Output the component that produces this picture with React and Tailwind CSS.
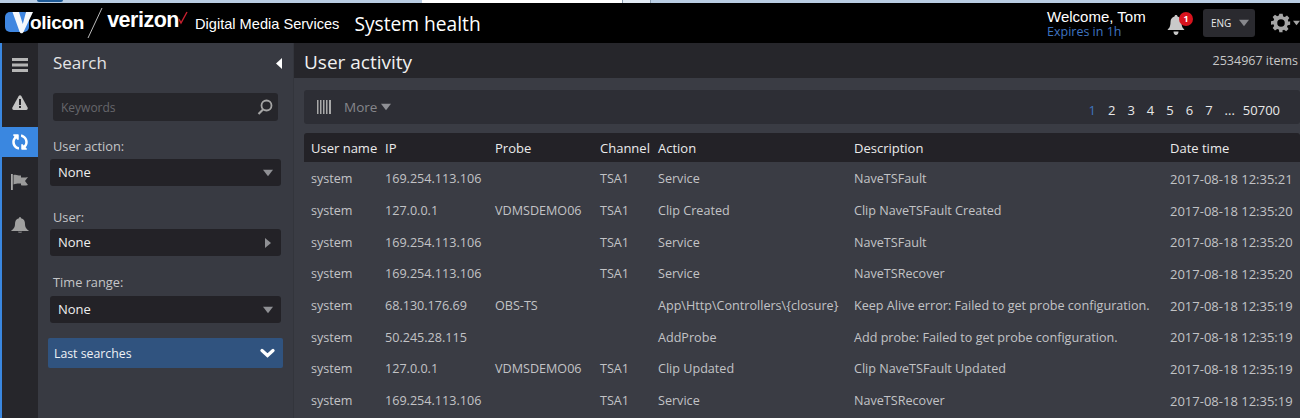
import React from "react";
import { FaSyncAlt } from "react-icons/fa";

const rows = [
  ["system", "169.254.113.106", "", "TSA1", "Service", "NaveTSFault", "2017-08-18 12:35:21"],
  ["system", "127.0.0.1", "VDMSDEMO06", "TSA1", "Clip Created", "Clip NaveTSFault Created", "2017-08-18 12:35:20"],
  ["system", "169.254.113.106", "", "TSA1", "Service", "NaveTSFault", "2017-08-18 12:35:20"],
  ["system", "169.254.113.106", "", "TSA1", "Service", "NaveTSRecover", "2017-08-18 12:35:20"],
  ["system", "68.130.176.69", "OBS-TS", "", "App\\Http\\Controllers\\{closure}", "Keep Alive error: Failed to get probe configuration.", "2017-08-18 12:35:19"],
  ["system", "50.245.28.115", "", "", "AddProbe", "Add probe: Failed to get probe configuration.", "2017-08-18 12:35:19"],
  ["system", "127.0.0.1", "VDMSDEMO06", "TSA1", "Clip Updated", "Clip NaveTSFault Updated", "2017-08-18 12:35:19"],
  ["system", "169.254.113.106", "", "TSA1", "Service", "NaveTSRecover", "2017-08-18 12:35:19"],
];
const cols = "grid grid-cols-[74px_110px_105px_58px_196px_316px_130px]";
const open = { fontFamily: '"Open Sans", "Noto Sans", sans-serif' };
const arial = { fontFamily: '"Liberation Sans", Arial, sans-serif' };

const Tri = ({ className = "" }) => (
  <svg width="12" height="8" viewBox="0 0 12 8" className={className}><path d="M0 0h12L6 8z" fill="currentColor" /></svg>
);

function Select({ label, arrow = "down", wrap, gap }) {
  return (
    <div className={wrap}>
      <div className="text-[12.8px] leading-[18px] text-[#c4c5c8] pl-[3px]">{label}</div>
      <div className={`${gap} h-[27px] rounded-[3px] bg-[#232227] flex items-center justify-between pl-[8px] pr-[8px] text-[13px] text-[#eeeeee]`}>
        <span className="pt-[1px]">None</span>
        {arrow === "down" ? <Tri className="text-[#8f9094] w-[10px]" /> : (
          <svg width="6" height="10" viewBox="0 0 6 10" className="mr-[2px]"><path d="M0 0l6 5-6 5z" fill="#8f9094" /></svg>
        )}
      </div>
    </div>
  );
}

export default function App() {
  return (
    <div className="w-[1300px] h-[418px] overflow-hidden flex flex-col bg-[#383a42]" style={open}>
      <div className="h-[3px] bg-[#b9cde3] shrink-0 flex">
        <div className="ml-[37px] w-[26px] h-[2px] bg-[#1e5a96] rounded-b" />
        <div className="ml-[359px] w-[200px] h-[3px] bg-white" />
        <div className="w-[29px] h-[3px] bg-[#e3ebf4] border-l border-r border-[#8a9cb0]" />
      </div>
      <header className="h-[40px] bg-black shrink-0 flex items-center text-white">
        <div className="flex items-center ml-[5px] w-[190px] shrink-0">
          <svg width="29" height="24" viewBox="0 0 29 24" className="shrink-0">
            <rect x="0" y="1" width="24" height="20" rx="5" fill="#3f86e0" />
            <path d="M7.500 1h6.500l3.800 12L21 1h7l-9.500 20c-.8 1.800-3 1.800-3.800 0z" fill="#f6f8fb" />
          </svg>
          <span className="-ml-[4px] text-[19px] font-bold tracking-[-0.3px]" style={arial}>olicon</span>
          <svg width="18" height="36" viewBox="0 0 18 36" className="ml-[2px] shrink-0"><path d="M16 3L2 33" stroke="#bbbbbb" strokeWidth="1" /></svg>
          <span className="ml-[3px] text-[21.500px] font-bold tracking-[-0.5px] -mt-[5px]" style={arial}>verizon</span>
          <svg width="10" height="14" viewBox="0 0 10 14" className="-mt-[10px] -ml-[1px] shrink-0"><path d="M1 8l2 4 6-11" stroke="#c8202f" strokeWidth="1.400" fill="none" /></svg>
        </div>
        <span className="text-[14.6px] mt-[4px]" style={arial}>Digital Media Services</span>
        <span className="ml-[15px] text-[19.2px] mt-[2px]">System health</span>
        <div className="ml-auto flex items-center">
          <div className="w-[104px] mt-[2px]">
            <div className="text-[15px] leading-[16px] text-white" style={arial}>Welcome, Tom</div>
            <div className="text-[12.500px] leading-[14px] text-[#3f74c0]">Expires in 1h</div>
          </div>
          <div className="relative ml-[16px] w-[24px] h-[24px]">
            <svg width="18" height="20" viewBox="0 0 18 20" className="absolute left-0 top-[4px]"><path d="M9 0c1 0 1.500.6 1.500 1.500C13 2.200 14.500 4 14.500 7c0 5 1.500 6 3 8H.5c1.500-2 3-3 3-8 0-3 1.500-4.800 4-5.500C7.500.6 8 0 9 0zM6.500 16.500h5C11.500 18.500 10.500 20 9 20s-2.500-1.500-2.500-3.500z" fill="#c9c9c9" /></svg>
            <span className="absolute left-[12px] top-[1px] w-[14px] h-[14px] rounded-full bg-[#d8131d] text-[9px] leading-[14px] text-center font-bold text-white">1</span>
          </div>
          <div className="ml-[12px] w-[52px] h-[28px] rounded-[3px] bg-[#2a2a2f] flex items-center pl-[8px] text-[10px] text-[#e8e8e8]">
            ENG<Tri className="ml-[8px] w-[10px] text-[#87888c]" />
          </div>
          <svg width="20" height="20" viewBox="0 0 24 24" className="ml-[16px]" fill="#a5a5a5"><path fillRule="evenodd" d="M10 1h4l.6 3.100 2 .8 2.600-1.800 2.800 2.800-1.800 2.600.8 2L23 10v4l-3 .6-.8 2 1.800 2.600-2.800 2.800-2.600-1.800-2 .8L14 23h-4l-.6-3.100-2-.8-2.600 1.800L2 18.100l1.800-2.600-.8-2L0 14v-4l3-.6.8-2L2 4.900 4.800 2.100l2.600 1.800 2-.8zM12 7.500a4.500 4.500 0 100 9 4.500 4.500 0 000-9z" /></svg>
          <Tri className="ml-[2px] w-[7px] text-[#a5a5a5]" />
        </div>
      </header>
      <div className="flex-1 flex min-h-0">
        <nav className="w-[38px] shrink-0 bg-[#26262b] border-l-2 border-[#3a87e0] flex flex-col items-center text-[#b9b9b9]">
          <div className="h-[43px] w-full flex items-center justify-center">
            <svg width="16" height="14" viewBox="0 0 16 14" fill="#b5b5b5"><rect width="16" height="3" /><rect y="5.500" width="16" height="3" /><rect y="11" width="16" height="3" /></svg>
          </div>
          <div className="h-[42px] w-full flex items-center justify-center -mt-[1px] pb-[7px]">
            <svg width="16" height="15" viewBox="0 0 16 15"><path d="M6.700 1c.6-1 2-1 2.600 0l6.300 11.500c.5 1-.2 2.500-1.300 2.500H1.700C.6 15-.1 13.500.4 12.500z" fill="#c4c4c4" /><rect x="7" y="4" width="2" height="6" fill="#26262b" /><rect x="7" y="11" width="2" height="2" fill="#26262b" /></svg>
          </div>
          <div className="h-[30px] w-full bg-[#3a87e0] flex items-center justify-center">
            <FaSyncAlt size={16} color="#ffffff" className="rotate-90" />
          </div>
          <div className="h-[50px] w-full flex items-center justify-center">
            <svg width="18" height="16" viewBox="0 0 18 16"><rect width="1.800" height="16" fill="#a8a8a8" /><path d="M2.500 1c3-1 5 1 7.500.5v2c3 .3 5 0 7-.5l-3 4 3 4c-3 1-5 .5-7 .3V9.500c-3-.2-5 0-7.500 1z" fill="#9b9b9b" /></svg>
          </div>
          <div className="h-[36px] w-full flex items-center justify-center">
            <svg width="18" height="16" viewBox="0 0 18 16"><path d="M9 0c1 0 1 .8 1 1.200C13 2 14 4 14 7c0 4 2 5 4 7H0c2-2 4-3 4-7 0-3 1-5 4-5.800C8 .8 8 0 9 0z" fill="#a0a0a0" /><path d="M7 14.800h4C11 16 7 16 7 14.800z" fill="#a0a0a0" /></svg>
          </div>
        </nav>
        <aside className="w-[255px] shrink-0 px-[10px] bg-[#383a42]">
          <div className="h-[40px] flex items-center justify-between pl-[5px] pr-[1px]">
            <span className="text-[17px] text-[#e4e4e6]">Search</span>
            <svg width="6" height="11" viewBox="0 0 6 11"><path d="M6 0v11L0 5.500z" fill="#ffffff" /></svg>
          </div>
          <div className="ml-[5px] mt-[10px] w-[225px] h-[28px] rounded-[3px] bg-[#26262b] flex items-center justify-between pl-[8px] pr-[5px]">
            <span className="text-[12px] text-[#66676c] pt-[2px]">Keywords</span>
            <svg width="16" height="16" viewBox="0 0 16 16" fill="none" stroke="#a5a5a5"><circle cx="9.500" cy="6.500" r="5" strokeWidth="1.800" /><path d="M6 10.500L1.500 15" strokeWidth="2.200" /></svg>
          </div>
          <Select label="User action:" wrap="mt-[16px] ml-[2px] w-[231px]" gap="mt-[4px]" />
          <Select label="User:" wrap="mt-[22px] ml-[2px] w-[231px]" gap="mt-[3px]" arrow="right" />
          <Select label="Time range:" wrap="mt-[17px] ml-[2px] w-[231px]" gap="mt-[5px]" />
          <div className="mt-[15px] h-[30px] w-[235px] bg-[#30537f] rounded-[2px] flex items-center justify-between pl-[6px] pr-[8px] text-[12.300px] text-[#eef1f5]">
            <span className="pt-[3px]">Last searches</span>
            <svg width="15" height="10" viewBox="0 0 15 10" fill="none" stroke="#ffffff" strokeWidth="3.200" strokeLinecap="round"><path d="M2 2.500l5.500 5 5.500-5" /></svg>
          </div>
        </aside>
        <main className="flex-1 min-w-0 border-l border-[#33353c] bg-[#3a3c44]">
          <div className="h-[35px] bg-[#26262b] flex items-center justify-between pl-[10px]">
            <span className="text-[19px] text-[#f0f0f0] leading-none pt-[4px]">User activity</span>
            <span className="text-[12.500px] text-[#c8c8c8] pt-[1px] pr-[2px]">2534967 items</span>
          </div>
          <div className="ml-[10px] mt-[12px] h-[34px] bg-[#2d2e35] rounded-[3px] flex items-center pl-[13px] pr-[20px]">
            <svg width="14" height="14" viewBox="0 0 14 14" fill="#a8a8a8"><rect width="1.500" height="14" /><rect x="3" width="1.500" height="14" /><rect x="6" width="1.500" height="14" /><rect x="9" width="1.500" height="14" /><rect x="12" width="2" height="14" /></svg>
            <span className="ml-[13px] text-[13.500px] text-[#85868b]">More</span>
            <Tri className="ml-[4px] w-[10px] text-[#8f9095]" />
            <div className="ml-auto flex items-center text-[13px] text-[#e8e8e8] gap-[12px] pt-[7px]">
              <span className="text-[#3f74c0]">1</span><span>2</span><span>3</span><span>4</span><span>5</span><span>6</span><span>7</span><span>...</span><span className="-ml-[4px]">50700</span>
            </div>
          </div>
          <div className="ml-[10px] mt-[9px] text-[12.600px]">
            <div className={`${cols} h-[29px] pt-[2px] items-center bg-[#232227] rounded-t-[3px] pl-[7px] text-[#ebebeb] text-[13px]`}>
              {["User name", "IP", "Probe", "Channel", "Action", "Description", "Date time"].map((h) => <div key={h} className="whitespace-nowrap">{h}</div>)}
            </div>
            {rows.map((r, i) => (
              <div key={i} className={`${cols} h-[31.650px] pt-[4px] items-center pl-[7px] text-[#c2c3c6]`}>
                {r.map((c, j) => <div key={j} className={j === 6 ? "whitespace-nowrap text-[13px]" : "whitespace-nowrap"}>{c}</div>)}
              </div>
            ))}
          </div>
        </main>
      </div>
    </div>
  );
}
